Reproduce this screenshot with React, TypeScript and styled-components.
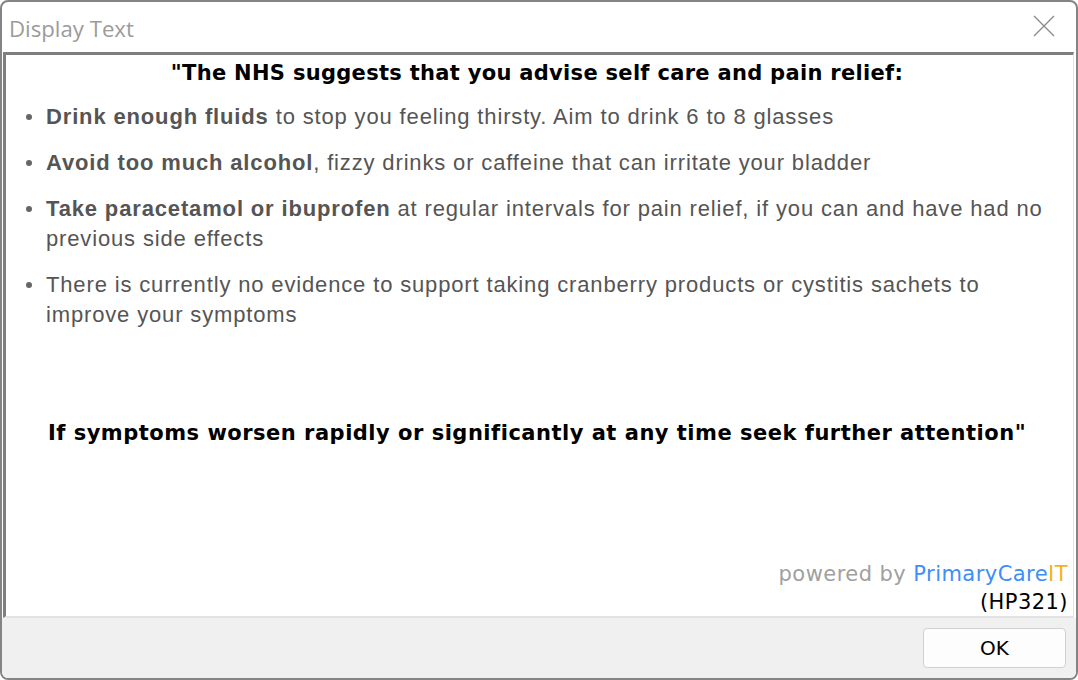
import React from "react";
import styled, { createGlobalStyle } from "styled-components";

const GlobalStyle = createGlobalStyle`
  html, body {
    margin: 0;
    padding: 0;
    background: #ffffff;
  }
  * {
    box-sizing: border-box;
  }
`;

const Window = styled.div`
  width: 1078px;
  height: 680px;
  border: 2px solid #848484;
  border-radius: 8px;
  overflow: hidden;
  background: #ffffff;
  display: flex;
  flex-direction: column;
`;

const TitleBar = styled.div`
  height: 50px;
  flex: 0 0 50px;
  display: flex;
  align-items: center;
  justify-content: space-between;
  padding: 2px 12px 0 7px;
`;

const Title = styled.span`
  font-family: "Open Sans", "Noto Sans", sans-serif;
  font-size: 22.2px;
  color: #9b9b9b;
`;

const CloseButton = styled.button`
  width: 24px;
  height: 24px;
  padding: 0;
  border: none;
  background: transparent;
  display: flex;
  align-items: center;
  justify-content: center;
  margin-right: 8px;
  margin-bottom: 4px;
`;

const Panel = styled.div`
  flex: 1;
  margin: 0 2px 0 1px;
  border-top: 3px solid #7f7f7f;
  border-left: 3px solid #7f7f7f;
  border-right: 1px solid #e3e3e3;
  border-bottom: 2px solid #e3e3e3;
  padding: 3px 5px 0 0;
  display: flex;
  flex-direction: column;
`;

const Heading = styled.div<{ $gap?: number; $spacing: number }>`
  font-family: "DejaVu Sans", Verdana, sans-serif;
  font-weight: bold;
  font-size: 21px;
  line-height: 30px;
  color: #000000;
  text-align: center;
  margin-top: ${(p) => p.$gap ?? 0}px;
  letter-spacing: ${(p) => p.$spacing}px;
`;

const List = styled.ul`
  list-style: none;
  margin: 14px 0 0;
  padding: 0;
  display: flex;
  flex-direction: column;
  gap: 16px;
`;

const Item = styled.li`
  display: grid;
  grid-template-columns: 40px 1fr;
  font-family: "Liberation Sans", Arial, sans-serif;
  font-size: 22px;
  letter-spacing: 0.85px;
  line-height: 30px;
  color: #555555;
`;

const Bullet = styled.span`
  height: 30px;
  display: flex;
  align-items: center;
  justify-content: flex-end;
  padding-right: 14px;
  &::after {
    content: "";
    width: 6px;
    height: 6px;
    border-radius: 50%;
    background: #666666;
  }
`;

const Credit = styled.div`
  margin-top: auto;
  text-align: right;
  font-family: "DejaVu Sans", Verdana, sans-serif;
  font-size: 21px;
  line-height: 28px;
  letter-spacing: 0.45px;
`;

const Muted = styled.span<{ $color: string }>`
  color: ${(p) => p.$color};
`;

const Code = styled.div`
  color: #000000;
`;

const Footer = styled.div`
  flex: 0 0 60px;
  background: #f0f0f0;
  display: flex;
  align-items: center;
  justify-content: flex-end;
  padding-right: 10px;
`;

const OkButton = styled.button`
  width: 143px;
  height: 40px;
  background: #fdfdfd;
  border: 1px solid #d0d0d0;
  border-radius: 4px;
  font-family: "DejaVu Sans", Verdana, sans-serif;
  font-size: 20px;
  color: #000000;
  padding: 0;
`;

const items = [
  { bold: "Drink enough fluids", rest: " to stop you feeling thirsty. Aim to drink 6 to 8 glasses" },
  { bold: "Avoid too much alcohol", rest: ", fizzy drinks or caffeine that can irritate your bladder" },
  {
    bold: "Take paracetamol or ibuprofen",
    rest: " at regular intervals for pain relief, if you can and have had no previous side effects",
  },
  {
    bold: "",
    rest: "There is currently no evidence to support taking cranberry products or cystitis sachets to improve your symptoms",
  },
];

function App() {
  return (
    <>
      <GlobalStyle />
      <Window>
        <TitleBar>
          <Title>Display Text</Title>
          <CloseButton aria-label="Close">
            <svg width="22" height="22" viewBox="0 0 22 22">
              <path d="M1 1 L21 21 M21 1 L1 21" stroke="#8a8a8a" strokeWidth="1.3" fill="none" />
            </svg>
          </CloseButton>
        </TitleBar>
        <Panel>
          <Heading $spacing={0.3}>"The NHS suggests that you advise self care and pain relief:</Heading>
          <List>
            {items.map((it, i) => (
              <Item key={i}>
                <Bullet />
                <span>
                  {it.bold && <b>{it.bold}</b>}
                  {it.rest}
                </span>
              </Item>
            ))}
          </List>
          <Heading $gap={88} $spacing={0.5}>
            If symptoms worsen rapidly or significantly at any time seek further attention"
          </Heading>
          <Credit>
            <div>
              <Muted $color="#a0a0a0">powered by </Muted>
              <Muted $color="#3d8ef8">PrimaryCare</Muted>
              <Muted $color="#f5b21b">IT</Muted>
            </div>
            <Code>(HP321)</Code>
          </Credit>
        </Panel>
        <Footer>
          <OkButton>OK</OkButton>
        </Footer>
      </Window>
    </>
  );
}

export default App;
